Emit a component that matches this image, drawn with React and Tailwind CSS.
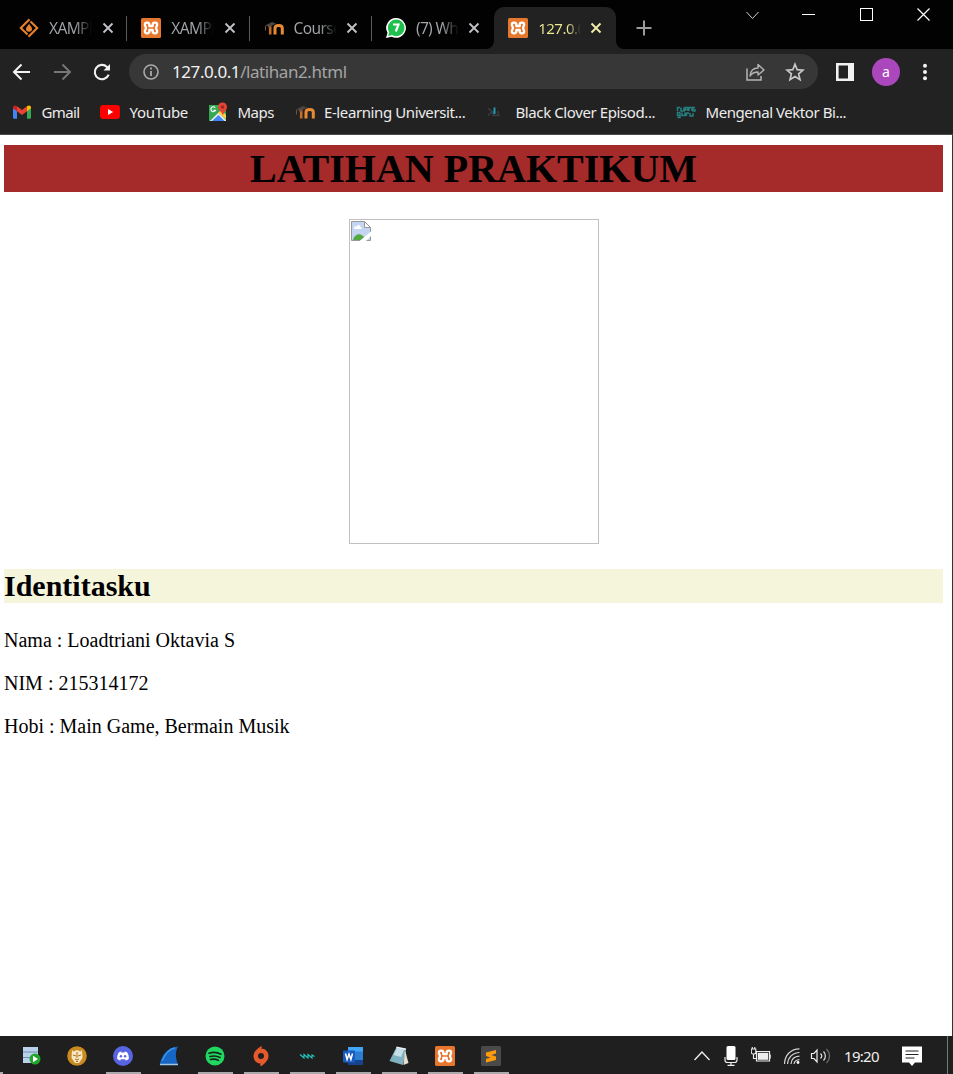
import React from 'react';

const Svg = ({ children, className = '', box = '0 0 20 20' }) => (
  <svg viewBox={box} className={`block shrink-0 ${className}`} fill="none">{children}</svg>
);

const Xampp = ({ className = 'size-5' }) => (
  <Svg className={className}>
    <rect width="20" height="20" rx="1.5" fill="#e8772e" />
    <path d="M8.300 8V6.700a2 2 0 0 0-2-2h-.4a2 2 0 0 0-2 2C3.900 8.400 4.900 8.600 4.900 10S3.900 11.600 3.900 13.300a2 2 0 0 0 2 2h.4a2 2 0 0 0 2-2V12h3.400v1.300a2 2 0 0 0 2 2h.4a2 2 0 0 0 2-2c0-1.700-1-1.900-1-3.300s1-1.600 1-3.300a2 2 0 0 0-2-2h-.4a2 2 0 0 0-2 2V8z" stroke="#fff" strokeWidth="2.300" strokeLinejoin="round" />
  </Svg>
);

const XamppDiamond = () => (
  <Svg className="size-5">
    <path d="M10.500 1.300 1.800 10l6.700 6.500M9.500 18.700 18.200 10l-6.700-6.500" stroke="#e9812c" strokeWidth="2.100" />
    <path d="M10 5.500c.5 2 3 3 3 5.200a3 3 0 0 1-6 0C7 8.800 9.500 8 10 5.500Z" fill="#e9812c" />
  </Svg>
);

const Moodle = () => (
  <Svg className="size-5">
    <path d="M1 7.500 8 4l4 1.500-6 3.200z" fill="#4b4542" />
    <path d="M1.500 8v4.500" stroke="#6a5748" />
    <path d="M6.200 16.500V8.800" stroke="#c96d24" strokeWidth="2.600" />
    <path d="M11 16.500V10.200c0-3.600 7.300-3.600 7.300 0v6.300" stroke="#e98a35" strokeWidth="3" />
    <path d="M4 8.500h3.500" stroke="#7c5336" strokeWidth="2" />
  </Svg>
);

const Whatsapp = () => (
  <Svg className="size-5">
    <path d="M10.200 0A9.900 9.900 0 1 1 5.500 18.700L0 20l1.500-5.200A9.900 9.900 0 0 1 10.200 0Z" fill="#fff" />
    <circle cx="10.200" cy="9.900" r="8.300" fill="#1fbf4b" />
    <path d="m2.100 17.900 1.200-4 3 3z" fill="#1fbf4b" />
    <path d="M7 6.500h5.500L9.800 13.500" stroke="#fff" strokeWidth="2.200" />
  </Svg>
);

const Close = ({ className = 'text-[#bfc1c4]' }) => (
  <Svg className={`size-3 ${className}`} box="0 0 12 12">
    <path d="m1.500 1.500 9 9m0-9-9 9" stroke="currentColor" strokeWidth="1.900" />
  </Svg>
);

const Tab = ({ icon, title, last }) => (
  <div className="relative flex h-[42px] w-[122.300px] items-center pl-[14px]">
    {icon}
    <span className="-mt-px ml-[10px] w-[43px] overflow-hidden whitespace-nowrap bg-linear-to-r from-[#a2a6aa] from-60% to-transparent bg-clip-text text-[15.500px] leading-5 tracking-[-0.650px] text-transparent">{title}</span>
    <span className="ml-[9.500px]"><Close /></span>
    {!last && <span className="absolute right-0 top-[9px] h-[25px] w-px bg-[#5a5a5a]" />}
  </div>
);

const Bookmark = ({ icon, children, width, track }) => (
  <div className={`flex shrink-0 items-center ${width}`}>
    {icon}
    <span className={`ml-[9.500px] whitespace-nowrap text-[15px] leading-5 text-[#ececec] ${track}`}>{children}</span>
  </div>
);

const Gmail = () => (
  <Svg className="size-5">
    <path d="M1 5v10.500c0 .8.500 1.300 1.300 1.300H5V8z" fill="#4285f4" />
    <path d="M19 5v10.500c0 .8-.5 1.300-1.300 1.300H15V8z" fill="#34a853" />
    <path d="M5 4.200 10 8l5-3.800v5L10 13 5 9.200z" fill="#ea4335" />
    <path d="M1 5.500C1 3.300 3.300 2.800 5 4.200v5L1 6.200z" fill="#c5221f" />
    <path d="M19 5.500c0-2.200-2.300-2.700-4-1.300v5l4-3z" fill="#fbbc04" />
  </Svg>
);

const Youtube = () => (
  <Svg className="size-5">
    <rect y="3" width="20" height="14" rx="3.200" fill="#f00" />
    <path d="m8 7 5.200 3L8 13z" fill="#fff" />
  </Svg>
);

const Maps = () => (
  <Svg className="size-5">
    <path d="M1 3h13l4 6v10H1z" fill="#34a853" />
    <path d="m2 19 8.500-8.500L18 18v1z" fill="#e8eaed" />
    <path d="m4 19 6.500-6 6 6z" fill="#4285f4" />
    <path d="m10 11 3-3 5 5v4z" fill="#fbd04b" />
    <path d="M7.200 5.700a2.400 2.400 0 1 0 .3 2.500H5.300" stroke="#fff" strokeWidth="1.100" />
    <path d="M14.500.5c2.600 0 4.500 1.900 4.500 4.500 0 3.500-3.600 4.500-4 9-.8-4.500-5-5.500-5-9 0-2.600 1.900-4.500 4.500-4.500Z" fill="#e64335" />
    <circle cx="14.500" cy="5" r="1.700" fill="#972820" />
  </Svg>
);

const Clover = () => (
  <Svg className="size-5">
    <path d="m2 6.500 4 3-4 4M7 13.500h7M7 9v5m5-5v5" stroke="#343c40" strokeWidth="1.700" />
    <path d="M8.500 5.500V12" stroke="#249dbd" strokeWidth="1.900" />
  </Svg>
);

const Ruang = () => (
  <Svg className="size-5">
    <path d="M1.500 9V5.500H4m1 0V9h3V5.500M9 9V5.500h3V9M9 7.500h3M13 9V5.500h3V9m3-3.500h-2V9h2v-2M4 10.500H1.500v3H4m0-3v5H1.500M6 10.500v3h3v-3m1.500 3.500v-3h2.500m1 0v3h3v-3" stroke="#257f80" strokeWidth="1.500" />
  </Svg>
);

const Browser = () => (
  <header className="shrink-0 bg-[#222222] font-['Noto_Sans','Open_Sans',sans-serif]">
    <div className="flex h-[49px] bg-[#020202] pl-[5px]">
      <div className="flex pt-[7px]">
        <Tab icon={<XamppDiamond />} title="XAMPP" />
        <Tab icon={<Xampp />} title="XAMPP" />
        <Tab icon={<Moodle />} title="Course" />
        <Tab icon={<Whatsapp />} title="(7) What" last />
        <div className="relative flex h-[42px] w-[122px] items-center rounded-t-[10px] bg-[#222222] pl-[14px]">
          <Svg className="absolute bottom-0 -left-2 size-2" box="0 0 8 8"><path d="M8 0v8H0a8 8 0 0 0 8-8" fill="#222" /></Svg>
          <Svg className="absolute bottom-0 -right-2 size-2" box="0 0 8 8"><path d="M0 0v8h8a8 8 0 0 1-8-8" fill="#222" /></Svg>
          <Xampp />
          <span className="-mt-px ml-[10px] w-[43px] overflow-hidden whitespace-nowrap bg-linear-to-r from-[#eeeb96] from-70% to-transparent bg-clip-text text-[15px] leading-5 tracking-[-0.500px] text-transparent">127.0.0.1</span>
          <span className="ml-[9px]"><Close className="text-[#f1edaa]" /></span>
        </div>
      </div>
      <Svg className="ml-[20px] mt-5 size-4" box="0 0 16 16"><path d="M8 .5v15M.5 8h15" stroke="#9c9c9c" strokeWidth="2" /></Svg>
      <div className="ml-[94px] mt-2 flex h-[14px] items-center">
        <Svg className="h-[14px] w-[13px]" box="0 0 13 14"><path d="m.5 4 6 6.500 6-6.500" stroke="#d0d0d0" /></Svg>
        <span className="-mt-px ml-[43px] h-px w-[13px] bg-white" />
        <span className="-mt-px ml-[45px] size-[13px] border border-white" />
        <Svg className="-mt-px ml-11 size-[13px]" box="0 0 13 13"><path d="m.5.5 12 12m0-12-12 12" stroke="#fff" strokeWidth="1.200" /></Svg>
      </div>
    </div>
    <div className="flex h-[40px] items-center pt-[5px]">
      <Svg className="ml-3 size-5"><path d="M18 10H2m7.500-7.500L2 10l7.500 7.500" stroke="#f2f2f2" strokeWidth="2" /></Svg>
      <Svg className="ml-[20px] size-5"><path d="M2 10h16m-7.500-7.500L18 10l-7.500 7.500" stroke="#777" strokeWidth="1.900" /></Svg>
      <Svg className="ml-[20px] size-5"><path d="M16.700 12.700A7.200 7.200 0 1 1 15 4.900l2 2" stroke="#f2f2f2" strokeWidth="2.100" /><path d="M18 2v6.500h-6.500z" fill="#f2f2f2" /></Svg>
      <div className="ml-[17px] flex h-[35px] w-[689px] items-center rounded-full bg-[#373737] pl-[14px] pr-[13px]">
        <Svg className="size-4" box="0 0 16 16"><circle cx="8" cy="8" r="7" stroke="#aaa" strokeWidth="1.600" /><path d="M8 7v5M8 3.500v2" stroke="#aaa" strokeWidth="1.800" /></Svg>
        <span className="ml-[13px] whitespace-nowrap text-[17px] leading-6 tracking-[-0.430px] text-[#a4a4a4]"><span className="text-[#f1f1f1]">127.0.0.1</span>/latihan2.html</span>
        <Svg className="ml-auto size-5"><path d="M2 6.500V18h14v-4" stroke="#b5b5b5" strokeWidth="1.500" /><path d="M5 14c.5-5 3-8 8-8V2.500L19 8l-6 5V10c-4 0-6 1-8 4Z" stroke="#b5b5b5" strokeWidth="1.400" strokeLinejoin="round" /></Svg>
        <Svg className="ml-[20px] size-5"><path d="m10 2.200 2.200 5.500 5.900.4-4.500 3.800 1.400 5.700-5-3.100-5 3.100 1.400-5.700-4.500-3.800 5.900-.4z" stroke="#c8c8c8" strokeWidth="1.700" /></Svg>
      </div>
      <Svg className="ml-[18px] size-[18px]" box="0 0 18 18"><path d="M1.300 1.300h15.400v15.400H1.300z" stroke="#f2f2f2" strokeWidth="2.600" /><path d="M12 1h5v16h-5z" fill="#f2f2f2" /></Svg>
      <span className="ml-[18px] flex size-7 items-center justify-center rounded-full bg-[#ab47bc] text-[14px] leading-none text-white">a</span>
      <Svg className="ml-[15px] size-5"><circle cx="10" cy="3.800" r="2" fill="#f2f2f2" /><circle cx="10" cy="10" r="2" fill="#f2f2f2" /><circle cx="10" cy="16.200" r="2" fill="#f2f2f2" /></Svg>
    </div>
    <div className="flex h-[46px] items-center border-b border-[#4a4a4a] pl-3">
      <Bookmark icon={<Gmail />} width="w-[88px]" track="tracking-[-0.600px]">Gmail</Bookmark>
      <Bookmark icon={<Youtube />} width="w-[108px]" track="tracking-[-0.300px]">YouTube</Bookmark>
      <Bookmark icon={<Maps />} width="w-[86.500px]" track="tracking-[-0.500px]">Maps</Bookmark>
      <Bookmark icon={<Moodle />} width="w-[191.500px]" track="tracking-[-0.400px]">E-learning Universit...</Bookmark>
      <Bookmark icon={<Clover />} width="w-[190px]" track="tracking-[-0.400px]">Black Clover Episod...</Bookmark>
      <Bookmark icon={<Ruang />} width="w-[190px]" track="tracking-[-0.440px]">Mengenal Vektor Bi...</Bookmark>
    </div>
  </header>
);

const Document = () => (
  <main className="flex flex-1 flex-col border-r border-[#333] bg-white pl-1 pr-[9px] pt-[10px] font-['Liberation_Serif',serif] text-black">
    <h1 className="h-[47px] bg-[#a52a2a] text-center text-[40px] font-bold leading-[47px]">LATIHAN PRAKTIKUM</h1>
    <div className="mx-auto mt-[27px] h-[325px] w-[250px] border border-[#c0c0c0] p-px">
      <Svg className="size-5">
        <path d="M.5.5h13l6 6v13H.5z" fill="#c3d5f3" stroke="#999" />
        <path d="M3 7c0-2 2-2 2.500-1C6 3 10 4 9.500 6 11 6 11 8 10 8H3z" fill="#fff" />
        <path d="M2 19c1-5 6-8 10-4l2 2v2z" fill="#52a944" />
        <path d="M13.500.5v6h6z" fill="#fff" stroke="#999" />
        <path d="M8.500 20 20 10.500V15l-5 5z" fill="#fff" />
      </Svg>
    </div>
    <h2 className="mt-[25px] h-[34px] bg-[#f5f5dc] text-[30px] font-bold leading-[34px]">Identitasku</h2>
    <div className="mt-[25.500px] flex flex-col gap-[21px] text-[20px] leading-[22px]">
      <p>Nama : Loadtriani Oktavia S</p>
      <p>NIM : 215314172</p>
      <p>Hobi : Main Game, Bermain Musik</p>
    </div>
  </main>
);

const ServerStart = () => (
  <Svg className="size-5">
    <path d="M2 1h15v16H2z" fill="#b8d1ed" /><path d="M2 6h15M2 11.500h15" stroke="#6d8dae" />
    <circle cx="14" cy="13" r="5.500" fill="#23a52b" /><path d="m12 9.800 5 3.200-5 3.200z" fill="#fff" />
  </Svg>
);
const Lion = () => (
  <Svg className="size-5">
    <circle cx="10" cy="10" r="9.800" fill="#c98a20" />
    <path d="m5 4 1.500 1.500L10 4l3.500 1.500L15 4l.5 8-3.500 5H8l-3.500-5z" fill="#f7e6c1" />
    <path d="m6 9 3 1m5-1-3 1m-3 3 2 1 2-1M9 15.500h2M10 6v6" stroke="#ad701a" strokeWidth="1" />
  </Svg>
);
const Discord = () => (
  <Svg className="size-5">
    <circle cx="10" cy="10" r="10" fill="#5865e2" />
    <path d="M6 6.200 8 5.600l.5.800h3l.5-.8 2 .6c1.500 2 2 4.300 1.800 6.800-1 .8-2 1.200-3 1.400l-.8-1.200H8l-.8 1.200c-1-.2-2-.6-3-1.400C4 10.500 4.500 8.200 6 6.200Z" fill="#fff" />
    <circle cx="7.900" cy="10.200" r="1.200" fill="#5865e2" /><circle cx="12.100" cy="10.200" r="1.200" fill="#5865e2" />
  </Svg>
);
const Shark = () => (
  <Svg className="size-5">
    <path d="M.5 18.500C3 10 7 1.500 19 .5c-3 5-2.500 12 0 18z" fill="#1766c5" />
    <path d="M1 18.500h18" stroke="#9ec5e7" strokeWidth="1.500" /><path d="M3 15C6 8 10 3 16 2" stroke="#3994e8" strokeWidth="1.500" />
  </Svg>
);
const Spotify = () => (
  <Svg className="size-5">
    <circle cx="10" cy="10" r="9.500" fill="#20d760" />
    <path d="M4 7.200c4-1.300 8.500-.9 12 1M5 10.500c3.500-1 7-.6 10 1M5.500 13.500c3-.8 5.500-.5 8 .9" stroke="#17231b" strokeWidth="1.600" strokeLinecap="round" />
  </Svg>
);
const Origin = () => (
  <Svg className="size-5">
    <path fillRule="evenodd" d="M10 2.500c4.500 0 7.500 3.300 7.500 7.500 0 4-3.500 7.500-7 10l-1.500-.5.500-2c-4 0-7-3.200-7-7.500C2.500 6 6 2.500 10 .2l1.200.5zM10 7a3 3 0 1 0 0 6 3 3 0 0 0 0-6" fill="#e45a2c" />
  </Svg>
);
const Wave = () => (
  <Svg className="size-5"><path d="M3 8.500 7 12V8.500l4 3.500V8.500l4 3.500V9l2.500 1.500" stroke="#20c9bd" strokeWidth="1.100" /></Svg>
);
const Word = () => (
  <Svg className="size-5">
    <rect x="5" y="1" width="15" height="18" rx="1" fill="#2b7cd3" /><path d="M5 1h15v4.500H5z" fill="#42a5f5" /><path d="M5 14h15v5H5z" fill="#16438d" />
    <rect y="4.500" width="12" height="12" rx="1" fill="#185abd" /><path d="m2.500 7.500 1.600 6L6 8l1.900 5.500 1.600-6" stroke="#fff" strokeWidth="1.500" />
  </Svg>
);
const Notepad = () => (
  <Svg className="size-5">
    <path d="M7.500 1 17 3l-3 16-13.500-4z" fill="#7fb3c1" /><path d="M8 2 15 3.500 12 11 4.500 9z" fill="#c4e0e6" /><path d="m16 4 3.500 13-5 2z" fill="#e6dfcf" /><path d="M7.500 1.300 17 3.300" stroke="#e6f3f4" strokeWidth="1.500" />
  </Svg>
);
const Sublime = () => (
  <Svg className="size-5">
    <rect width="20" height="20" rx="1.500" fill="#4a4a4a" /><path d="M5 6.500 15 4v3.500L10.500 9l4.500 1.500V14L5 16.500V13l4.500-1.500L5 10z" fill="#ff9b09" />
  </Svg>
);

const taskApps = [
  [ServerStart, false], [Lion, false], [Discord, true], [Shark, false], [Spotify, true], [Origin, true],
  [Wave, true], [Word, true], [Notepad, true], [Xampp, true], [Sublime, true],
];

const Taskbar = () => (
  <footer className="flex h-[38px] shrink-0 bg-[#1f1f1f] font-['Noto_Sans','Open_Sans',sans-serif]">
    <span className="mt-9 h-0.5 w-[3px] bg-[#aaa]" />
    <div className="ml-[5px] flex">
      {taskApps.map(([Icon, open], i) => (
        <div key={i} className="flex w-[46px] flex-col items-center">
          <div className="flex h-9 items-center pt-1"><Icon /></div>
          {open && <span className="h-0.5 w-[35px] bg-[#aaaaaa]" />}
        </div>
      ))}
    </div>
    <div className="ml-auto flex h-full items-center pt-0.5">
      <Svg className="h-[10px] w-4" box="0 0 16 10"><path d="m.5 9 7.500-8 7.500 8" stroke="#eee" strokeWidth="1.300" /></Svg>
      <Svg className="ml-[14px] h-5 w-[14px]" box="0 0 14 20"><rect x="2.500" width="9" height="14" rx="1.500" fill="#fff" /><path d="M1 11v3c0 1.500 1 2.500 2.500 2.500h7C12 16.500 13 15.500 13 14v-3M7 16v3m-3.500.3h7" stroke="#eee" strokeWidth="1.200" /></Svg>
      <Svg className="ml-[13px] h-5 w-5"><path d="M5.500 5.500h13v9.500h-13zM19.200 8.500v4" stroke="#eee" strokeWidth="1.200" /><path d="M6.800 6.800h10.400v7H6.800z" fill="#eee" /><path d="M.3 3h4.500v3.500c0 1-1 1.500-2.250 1.500S.3 7.500.3 6.500zM1.300 1v2m2.500-2v2M2.500 8v4.500h3" stroke="#eee" strokeWidth="1.100" /></Svg>
      <Svg className="ml-[13px] size-4" box="0 0 16 16"><path d="M.5 16C.8 7 7 .8 15.500.8M3.500 16C4 9.500 8.500 4.800 15.500 4.500M7 16c.3-4.500 3.500-7.500 8.500-7.800M10 16c.4-2.500 2-4 5.500-4.300" stroke="#d3d3d3" strokeWidth="1.200" /><circle cx="14" cy="14.500" r="1.400" fill="#fff" /></Svg>
      <Svg className="ml-[10px] h-5 w-[21px]" box="0 0 21 20"><path d="M1.500 7.500H4l3-3.500v12l-3-3.500H1.500z" stroke="#eee" strokeWidth="1.200" /><path d="M10.500 7.500c1.500 1.500 1.500 3.500 0 5M13.500 5.500c2.500 2.500 2.500 6.500 0 9" stroke="#ddd" strokeWidth="1.200" /><path d="M16.500 3c4 4 4 10 0 14" stroke="#737373" strokeWidth="1.200" /></Svg>
      <span className="ml-[13px] w-[35px] whitespace-nowrap text-[15px] leading-5 tracking-[-0.700px] text-[#eeeeee]">19:20</span>
      <Svg className="ml-[23px] size-5"><path d="M0 .5h20v16h-7L10 20l-3-3.500H0z" fill="#fff" /><path d="M3.500 5h13m-13 3.500h13m-13 3.500h9" stroke="#222" strokeWidth="1.200" /></Svg>
    </div>
    <span className="ml-[25px] mr-[5px] h-full w-px bg-[#777]" />
  </footer>
);

export default function App() {
  return <div className="flex h-[1074px] w-[953px] flex-col overflow-hidden"><Browser /><Document /><Taskbar /></div>;
}
